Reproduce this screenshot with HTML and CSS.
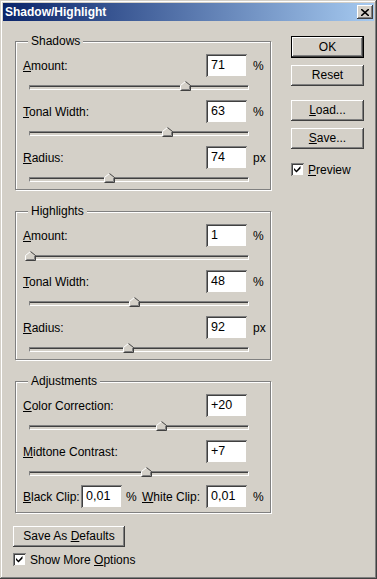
FILE: index.html
```html
<!DOCTYPE html>
<html>
<head>
  <meta charset="utf-8">
  <title>Shadow/Highlight</title>
  <link rel="stylesheet" href="styles.css">
</head>
<body>
  <div class="window">
    <div class="titlebar">
      <span class="title">Shadow/Highlight</span>
      <span class="close">
        <svg width="8" height="7" viewBox="0 0 8 7"><path d="M0 0 L8 7 M8 0 L0 7" stroke="#000" stroke-width="1.6"/></svg>
      </span>
    </div>

    <div class="main">
      <div class="left">
        <!-- shadows -->
        <div class="group">
          <span class="legend">Shadows</span>
          <div class="control">
            <div class="row"><span class="label"><u>A</u>mount:</span><span class="field">71</span><span class="unit">%</span></div>
            <div class="track"><span class="thumb" style="left:150px"><svg width="11" height="10"><polygon points="0.5,9.5 0.5,4.5 5.5,0.5 10.5,4.5 10.5,9.5" fill="#d4d0c8"/><path d="M0.5 9 V4.5 L5.5 0.5" stroke="#fff" fill="none"/><path d="M5.5 0.5 L10.5 4.5 V9.5 H0.5" stroke="#404040" fill="none"/><path d="M9.5 5 V8.5 H1.5" stroke="#808080" fill="none"/></svg></span></div>
          </div>
          <div class="control">
            <div class="row"><span class="label"><u>T</u>onal Width:</span><span class="field">63</span><span class="unit">%</span></div>
            <div class="track"><span class="thumb" style="left:132px"><svg width="11" height="10"><polygon points="0.5,9.5 0.5,4.5 5.5,0.5 10.5,4.5 10.5,9.5" fill="#d4d0c8"/><path d="M0.5 9 V4.5 L5.5 0.5" stroke="#fff" fill="none"/><path d="M5.5 0.5 L10.5 4.5 V9.5 H0.5" stroke="#404040" fill="none"/><path d="M9.5 5 V8.5 H1.5" stroke="#808080" fill="none"/></svg></span></div>
          </div>
          <div class="control">
            <div class="row"><span class="label"><u>R</u>adius:</span><span class="field">74</span><span class="unit">px</span></div>
            <div class="track"><span class="thumb" style="left:74px"><svg width="11" height="10"><polygon points="0.5,9.5 0.5,4.5 5.5,0.5 10.5,4.5 10.5,9.5" fill="#d4d0c8"/><path d="M0.5 9 V4.5 L5.5 0.5" stroke="#fff" fill="none"/><path d="M5.5 0.5 L10.5 4.5 V9.5 H0.5" stroke="#404040" fill="none"/><path d="M9.5 5 V8.5 H1.5" stroke="#808080" fill="none"/></svg></span></div>
          </div>
        </div>

        <!-- highlights -->
        <div class="group">
          <span class="legend">Highlights</span>
          <div class="control">
            <div class="row"><span class="label"><u>A</u>mount:</span><span class="field">1</span><span class="unit">%</span></div>
            <div class="track"><span class="thumb" style="left:-5px"><svg width="11" height="10"><polygon points="0.5,9.5 0.5,4.5 5.5,0.5 10.5,4.5 10.5,9.5" fill="#d4d0c8"/><path d="M0.5 9 V4.5 L5.5 0.5" stroke="#fff" fill="none"/><path d="M5.5 0.5 L10.5 4.5 V9.5 H0.5" stroke="#404040" fill="none"/><path d="M9.5 5 V8.5 H1.5" stroke="#808080" fill="none"/></svg></span></div>
          </div>
          <div class="control">
            <div class="row"><span class="label"><u>T</u>onal Width:</span><span class="field">48</span><span class="unit">%</span></div>
            <div class="track"><span class="thumb" style="left:99px"><svg width="11" height="10"><polygon points="0.5,9.5 0.5,4.5 5.5,0.5 10.5,4.5 10.5,9.5" fill="#d4d0c8"/><path d="M0.5 9 V4.5 L5.5 0.5" stroke="#fff" fill="none"/><path d="M5.5 0.5 L10.5 4.5 V9.5 H0.5" stroke="#404040" fill="none"/><path d="M9.5 5 V8.5 H1.5" stroke="#808080" fill="none"/></svg></span></div>
          </div>
          <div class="control">
            <div class="row"><span class="label"><u>R</u>adius:</span><span class="field">92</span><span class="unit">px</span></div>
            <div class="track"><span class="thumb" style="left:93px"><svg width="11" height="10"><polygon points="0.5,9.5 0.5,4.5 5.5,0.5 10.5,4.5 10.5,9.5" fill="#d4d0c8"/><path d="M0.5 9 V4.5 L5.5 0.5" stroke="#fff" fill="none"/><path d="M5.5 0.5 L10.5 4.5 V9.5 H0.5" stroke="#404040" fill="none"/><path d="M9.5 5 V8.5 H1.5" stroke="#808080" fill="none"/></svg></span></div>
          </div>
        </div>

        <!-- adjustments -->
        <div class="group">
          <span class="legend">Adjustments</span>
          <div class="control">
            <div class="row"><span class="label"><u>C</u>olor Correction:</span><span class="field">+20</span><span class="unit"></span></div>
            <div class="track"><span class="thumb" style="left:126px"><svg width="11" height="10"><polygon points="0.5,9.5 0.5,4.5 5.5,0.5 10.5,4.5 10.5,9.5" fill="#d4d0c8"/><path d="M0.5 9 V4.5 L5.5 0.5" stroke="#fff" fill="none"/><path d="M5.5 0.5 L10.5 4.5 V9.5 H0.5" stroke="#404040" fill="none"/><path d="M9.5 5 V8.5 H1.5" stroke="#808080" fill="none"/></svg></span></div>
          </div>
          <div class="control">
            <div class="row"><span class="label"><u>M</u>idtone Contrast:</span><span class="field">+7</span><span class="unit"></span></div>
            <div class="track"><span class="thumb" style="left:111px"><svg width="11" height="10"><polygon points="0.5,9.5 0.5,4.5 5.5,0.5 10.5,4.5 10.5,9.5" fill="#d4d0c8"/><path d="M0.5 9 V4.5 L5.5 0.5" stroke="#fff" fill="none"/><path d="M5.5 0.5 L10.5 4.5 V9.5 H0.5" stroke="#404040" fill="none"/><path d="M9.5 5 V8.5 H1.5" stroke="#808080" fill="none"/></svg></span></div>
          </div>
          <div class="row clip">
            <span class="clip-label"><u>B</u>lack Clip:</span><span class="field">0,01</span><span class="clip-unit">%</span>
            <span class="clip-label wide"><u>W</u>hite Clip:</span><span class="field">0,01</span><span class="unit">%</span>
          </div>
        </div>

        <div class="button wide-btn">Save As <u>D</u>efaults</div>
        <div class="check more"><span class="box"><svg width="7" height="7" viewBox="0 0 7 7"><path d="M6.5 0 V2.5 L2.5 6.5 L0 4 V2 L2.5 4.5 Z" fill="#000"/></svg></span><span>Show More <u>O</u>ptions</span></div>
      </div>

      <div class="right">
        <div class="button default">OK</div>
        <div class="button reset">Reset</div>
        <div class="button load"><u>L</u>oad...</div>
        <div class="button save"><u>S</u>ave...</div>
        <div class="check preview"><span class="box"><svg width="7" height="7" viewBox="0 0 7 7"><path d="M6.5 0 V2.5 L2.5 6.5 L0 4 V2 L2.5 4.5 Z" fill="#000"/></svg></span><span><u>P</u>review</span></div>
      </div>
    </div>
  </div>
</body>
</html>
```

FILE: styles.css
```css
html,
body {
  margin: 0;
  padding: 0;
  background: #d4d0c8;
}

body {
  font-family: "Liberation Sans", Arial, sans-serif;
  font-size: 12px;
  color: #000;
}

u {
  text-decoration: underline;
  text-underline-offset: 1px;
}

.window {
  box-sizing: border-box;
  width: 377px;
  height: 579px;
  padding: 3px;
  background: #d4d0c8;
  box-shadow: inset -1px -1px #404040, inset 1px 1px #d4d0c8,
    inset -2px -2px #808080, inset 2px 2px #fff;
}

.titlebar {
  display: flex;
  align-items: center;
  justify-content: space-between;
  height: 18px;
  padding: 0 1px 0 2px;
  background: linear-gradient(to right, #0a246a, #a6caf0);
}

.title {
  color: #fff;
  font-weight: bold;
  font-size: 12px;
}

.close {
  display: flex;
  align-items: center;
  justify-content: center;
  width: 16px;
  height: 14px;
  background: #d4d0c8;
  box-shadow: inset -1px -1px #404040, inset 1px 1px #fff,
    inset -2px -2px #808080;
}

.main {
  display: flex;
}

.left {
  padding-left: 10px;
}

.group {
  position: relative;
  box-sizing: border-box;
  width: 256px;
  margin: 21px 0 0 2px;
  padding: 12px 0 4px 7px;
  border: 1px solid #808080;
  box-shadow: 1px 1px 0 #fff, inset 1px 1px 0 #fff;
}

.group:first-child {
  margin-top: 20px;
}

.legend {
  position: absolute;
  top: -8px;
  left: 12px;
  padding: 0 3px;
  background: #d4d0c8;
  line-height: 14px;
}

.control {
  display: flex;
  flex-direction: column;
}

.control + .control {
  margin-top: 7px;
}

.row {
  display: flex;
  align-items: center;
  height: 23px;
}

.label {
  flex: 1;
}

.field {
  box-sizing: border-box;
  width: 41px;
  height: 23px;
  padding-left: 5px;
  line-height: 23px;
  font-size: 12.5px;
  background: #fff;
  box-shadow: inset 1px 1px #808080, inset -1px -1px #d4d0c8,
    inset 2px 2px #404040;
}

.unit {
  box-sizing: border-box;
  width: 23px;
  padding-left: 6px;
}

.track {
  position: relative;
  box-sizing: border-box;
  width: 220px;
  height: 5px;
  margin: 8px 0 3px 6px;
  border-top: 1px solid #808080;
  border-left: 1px solid #808080;
  border-bottom: 1px solid #fff;
  border-right: 1px solid #fff;
  background: #d4d0c8;
  box-shadow: inset 0 1px #404040;
}

.thumb {
  position: absolute;
  top: -5px;
  width: 11px;
  height: 10px;
  line-height: 0;
}

.clip {
  margin-top: 6px;
}

.clip-label {
  width: 58px;
}

.clip-label.wide {
  width: 64px;
}

.clip-unit {
  box-sizing: border-box;
  width: 20px;
  padding-left: 4px;
}

.button {
  box-sizing: border-box;
  height: 21px;
  line-height: 20px;
  text-align: center;
  background: #d4d0c8;
  box-shadow: inset -1px -1px #404040, inset 1px 1px #fff,
    inset -2px -2px #808080, inset 2px 2px #d4d0c8;
}

.button.default {
  height: 22px;
  border: 1px solid #000;
  line-height: 20px;
}

.wide-btn {
  width: 112px;
  margin-top: 13px;
}

.right {
  width: 73px;
  margin-left: 20px;
  padding-top: 15px;
}

.reset {
  margin-top: 7px;
}

.load {
  margin-top: 14px;
}

.save {
  margin-top: 7px;
}

.check {
  display: flex;
  align-items: center;
  gap: 4px;
  height: 13px;
}

.box {
  box-sizing: border-box;
  display: flex;
  align-items: center;
  justify-content: center;
  width: 13px;
  height: 13px;
  background: #fff;
  box-shadow: inset 1px 1px #808080, inset -1px -1px #d4d0c8,
    inset 2px 2px #404040, inset -2px -2px #fff;
}

.preview {
  margin-top: 14px;
}

.more {
  margin-top: 6px;
}
```
